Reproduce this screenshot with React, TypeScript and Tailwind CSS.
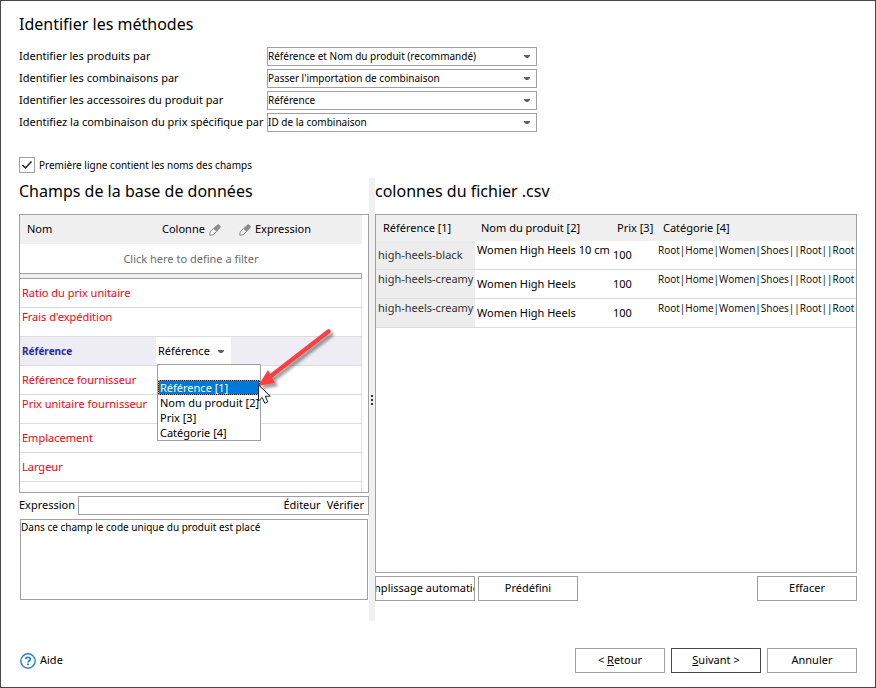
import type { ReactNode } from "react";

const METHODS = [
  { id: "products", label: "Identifier les produits par", value: "Référence et Nom du produit (recommandé)" },
  { id: "combinations", label: "Identifier les combinaisons par", value: "Passer l'importation de combinaison" },
  { id: "accessories", label: "Identifier les accessoires du produit par", value: "Référence" },
  { id: "price", label: "Identifiez la combinaison du prix spécifique par", value: "ID de la combinaison" },
];

const FIELDS = [
  { name: "Ratio du prix unitaire", top: false },
  { name: "Frais d'expédition", top: true },
  { name: "Référence", selected: true },
  { name: "Référence fournisseur", top: false },
  { name: "Prix unitaire fournisseur", top: true },
  { name: "Emplacement", top: false },
  { name: "Largeur", top: false },
];

const OPTIONS = ["", "Référence [1]", "Nom du produit [2]", "Prix [3]", "Catégorie [4]"];

const CATEGORY = "Root|Home|Women|Shoes||Root||Root";
const PRODUCTS = [
  { ref: "high-heels-black", name: "Women High Heels 10 cm", refTop: false, nameTop: true },
  { ref: "high-heels-creamy", name: "Women High Heels", refTop: true, nameTop: false },
  { ref: "high-heels-creamy", name: "Women High Heels", refTop: true, nameTop: false },
];

function Caret() {
  return (
    <svg className="pointer-events-none h-[3px] w-[6px]" viewBox="0 0 6 3" aria-hidden="true">
      <path d="M0 0h6v1L4 3H2L0 1z" fill="#606060" />
    </svg>
  );
}

function Pencil() {
  return (
    <svg className="h-3 w-3" viewBox="0 0 12 12" aria-hidden="true">
      <path d="M6.800 2 9.200 0 12 2.400 10.800 4.600 7.600 8 4 4.600z" fill="#8c8c8c" />
      <path d="M4.200 4.800 1.200 7.800.7 11.300 4.200 10.800 7.200 7.800" fill="#fafafa" stroke="#8c8c8c" />
    </svg>
  );
}

function Button({ children, className = "" }: { children: ReactNode; className?: string }) {
  return (
    <button
      type="button"
      className={`flex h-[25px] items-center justify-center overflow-hidden whitespace-nowrap border bg-white ${className}`}
    >
      {children}
    </button>
  );
}

function ColumnPicker() {
  return (
    <div className="relative flex h-7 items-center bg-white">
      <select
        aria-label="Colonne"
        defaultValue="Référence"
        className="h-7 w-full appearance-none bg-transparent pl-[2px] outline-none"
      >
        <option>Référence</option>
      </select>
      <span className="pointer-events-none absolute inset-y-0 right-[7px] flex items-center">
        <Caret />
      </span>
      <ul role="listbox" aria-label="Colonnes" className="absolute top-[27px] left-px z-10 w-[104px] border border-[#a0a0a0] bg-white">
        {OPTIONS.map((o) =>
          o === "Référence [1]" ? (
            <li key={o} role="option" aria-selected="true" className="h-[15px] border border-dotted border-[#ff8728] bg-black text-white">
              <span className="block bg-[#0078d7] pl-px leading-[13px] whitespace-nowrap">{o}</span>
            </li>
          ) : (
            <li key={o} role="option" aria-selected="false" className="h-[15px] pl-[2px] leading-[15px] whitespace-nowrap">
              {o}
            </li>
          ),
        )}
      </ul>
      <svg className="pointer-events-none absolute -top-3 left-[94px] z-20 h-[90px] w-[94px]" viewBox="0 0 94 90" aria-hidden="true">
        <defs>
          <filter id="shadow" x="-20%" y="-20%" width="150%" height="150%">
            <feDropShadow dx="3" dy="3" stdDeviation="1.5" floodColor="#000" floodOpacity="0.4" />
          </filter>
        </defs>
        <g filter="url(#shadow)">
          <path d="M78.500 6.500 19 52.500" stroke="#fb4143" strokeWidth="4.500" strokeLinecap="round" />
          <path d="M8 61 18 45 25 58z" fill="#fb4143" />
        </g>
        <path d="M8.500 60v16l3.700-3.500 2.600 5.700 3-1.300-2.500-5.700h5z" fill="#fff" stroke="#1c1c30" />
      </svg>
    </div>
  );
}

export default function App() {
  return (
    <div className="flex min-h-screen flex-col border border-[#47464a] bg-white px-[18px] pt-[11px] pb-[14px] font-['Noto_Sans','Open_Sans',sans-serif] text-[11px] text-black">
      <h1 className="text-[16px] leading-6">Identifier les méthodes</h1>

      <div className="mt-[11px] flex flex-col gap-[3px]">
        {METHODS.map((m) => (
          <div key={m.id} className="flex h-[19px] items-center">
            <label htmlFor={m.id} className="w-[248px] whitespace-nowrap">
              {m.label}
            </label>
            <div className="relative w-[270px]">
              <select
                id={m.id}
                defaultValue={m.value}
                className="block h-[19px] w-full appearance-none border border-[#a0a0a0] bg-white text-[10px] outline-none"
              >
                <option>{m.value}</option>
              </select>
              <span className="pointer-events-none absolute inset-y-0 right-[7px] flex items-center">
                <Caret />
              </span>
            </div>
          </div>
        ))}
      </div>

      <label className="mt-[25px] flex h-4 items-center gap-1 text-[10px]">
        <span className="relative h-4 w-4">
          <input type="checkbox" defaultChecked className="block h-4 w-4 appearance-none border border-[#a0a0a0] bg-white" />
          <svg className="pointer-events-none absolute inset-0 h-4 w-4" viewBox="0 0 16 16" aria-hidden="true">
            <path d="M3.500 8 6.500 11 12.500 4.500" fill="none" stroke="#222" strokeWidth="1.500" />
          </svg>
        </span>
        Première ligne contient les noms des champs
      </label>

      <main className="mt-[5px] flex min-w-0 flex-1">
        <section className="flex w-[350px] shrink-0 flex-col pb-[21px]">
          <h2 className="mb-[10px] text-[16px] leading-[26px]">Champs de la base de données</h2>
          <div className="flex flex-1 flex-col border border-[#a0a0a0] pr-[6px]">
            <table className="w-full table-fixed border-collapse">
              <colgroup>
                <col className="w-[136px]" />
                <col className="w-[75px]" />
                <col />
              </colgroup>
              <thead>
                <tr className="h-[29px] bg-[#f0f0f0] text-left">
                  <th className="p-0 pl-[7px] font-normal">Nom</th>
                  <th className="p-0 pl-[6px] font-normal">
                    <span className="flex items-center gap-1">
                      Colonne <Pencil />
                    </span>
                  </th>
                  <th className="p-0 pl-2 font-normal">
                    <span className="flex items-center gap-1">
                      <Pencil /> Expression
                    </span>
                  </th>
                </tr>
              </thead>
            </table>
            <button type="button" className="h-[29px] pt-px text-center text-[#6d6d6d]">
              Click here to define a filter
            </button>
            <div className="h-[6px] border-y border-r border-[#a0a0a0] bg-[#f0f0f0]" />
            <div className="flex-1 border-r border-[#e0e0e0]">
              <table className="w-full table-fixed border-separate border-spacing-0">
                <colgroup>
                  <col className="w-[136px]" />
                  <col className="w-[75px]" />
                  <col />
                </colgroup>
                <tbody>
                  {FIELDS.map((f) =>
                    f.selected ? (
                      <tr key={f.name} className="h-[29px] bg-[#eeedf4]">
                        <td className="border-b border-[#dcdcdc] p-0 pl-[2px] font-bold text-[#2b2ba5]">
                          <span className="text-[10px]">{f.name}</span>
                        </td>
                        <td className="border-b border-[#dcdcdc] p-0">
                          <ColumnPicker />
                        </td>
                        <td className="border-b border-[#dcdcdc] p-0" />
                      </tr>
                    ) : (
                      <tr key={f.name} className="h-[29px]">
                        <td
                          colSpan={3}
                          className={`border-b border-[#dcdcdc] p-0 pl-[2px] leading-[18px] text-[#fa0010] ${f.top ? "align-top" : "align-middle"}`}
                        >
                          {f.name}
                        </td>
                      </tr>
                    ),
                  )}
                </tbody>
              </table>
            </div>
          </div>

          <div className="mt-[3px] flex h-[19px] items-center">
            <label htmlFor="expression" className="w-[59px]">
              Expression
            </label>
            <div className="flex h-[19px] flex-1 items-center gap-[6px] border border-[#a0a0a0] pr-1">
              <input id="expression" type="text" className="h-full min-w-0 flex-1 bg-transparent outline-none" />
              <button type="button">Éditeur</button>
              <button type="button">Vérifier</button>
            </div>
          </div>
          <textarea
            aria-label="Description"
            readOnly
            defaultValue="Dans ce champ le code unique du produit est placé"
            className="mt-1 mr-px ml-px h-[81px] resize-none border border-[#a0a0a0] text-[10px] leading-[15px] outline-none"
          />
        </section>

        <div className="flex w-[6px] shrink-0 flex-col items-center justify-center gap-[2px] bg-[#f0f0f0]">
          <span className="h-[2px] w-[2px] bg-[#333]" />
          <span className="h-[2px] w-[2px] bg-[#333]" />
          <span className="h-[2px] w-[2px] bg-[#333]" />
        </div>

        <section className="flex min-w-0 flex-1 flex-col pb-[20px]">
          <h2 className="mb-[10px] text-[16px] leading-[26px]">colonnes du fichier .csv</h2>
          <div className="flex-1 overflow-hidden border border-[#a0a0a0]">
            <table className="w-full table-fixed border-separate border-spacing-0 whitespace-nowrap">
              <colgroup>
                <col className="w-[99px]" />
                <col className="w-[136px]" />
                <col className="w-[46px]" />
                <col />
              </colgroup>
              <thead>
                <tr className="h-[26px] bg-[#f0f0f0] text-left">
                  <th className="p-0 pl-[7px] font-normal">Référence [1]</th>
                  <th className="p-0 pl-[6px] font-normal">Nom du produit [2]</th>
                  <th className="p-0 pl-[6px] font-normal">Prix [3]</th>
                  <th className="p-0 pl-[6px] font-normal">Catégorie [4]</th>
                </tr>
              </thead>
              <tbody className="leading-[18px]">
                {PRODUCTS.map((p, i) => (
                  <tr key={i} className="h-[29px]">
                    <td className={`border-b border-[#dcdcdc] bg-[#ededed] p-0 pl-[2px] text-[#333] ${p.refTop ? "align-top" : "align-middle"}`}>
                      {p.ref}
                    </td>
                    <td className={`border-b border-[#dcdcdc] p-0 pl-[2px] ${p.nameTop ? "align-top" : "align-middle"}`}>{p.name}</td>
                    <td className="border-b border-[#dcdcdc] p-0 pl-[2px] align-middle">100</td>
                    <td className="border-b border-[#dcdcdc] p-0 pl-px align-top font-['Open_Sans','Noto_Sans',sans-serif] text-[10px]">
                      {CATEGORY}
                    </td>
                  </tr>
                ))}
              </tbody>
            </table>
          </div>
          <div className="mt-[3px] flex gap-[3px]">
            <Button className="w-[100px] border-[#a0a0a0]">Remplissage automatique</Button>
            <Button className="w-[100px] border-[#a0a0a0]">Prédéfini</Button>
            <Button className="ml-auto w-[100px] border-[#a0a0a0]">Effacer</Button>
          </div>
        </section>
      </main>

      <footer className="mt-[27px] flex items-center gap-[6px]">
        <a href="#aide" className="mr-auto ml-px flex items-center gap-1">
          <svg className="h-4 w-4" viewBox="0 0 16 16" aria-hidden="true">
            <circle cx="8" cy="8" r="7.200" fill="#fff" stroke="#2b7de0" strokeWidth="1.400" />
            <path d="M5.700 6.300C5.700 3.700 10.300 3.700 10.300 6.200 10.300 7.800 8 7.800 8 9.500" fill="none" stroke="#2b7de0" strokeWidth="1.700" />
            <path d="M7.100 10.500h1.800v1.800H7.100z" fill="#2b7de0" />
          </svg>
          Aide
        </a>
        <Button className="w-[90px] border-[#a0a0a0]">
          <span>
            &lt; <u>R</u>etour
          </span>
        </Button>
        <Button className="w-[90px] border-[#47475c]">
          <span>
            <u>S</u>uivant &gt;
          </span>
        </Button>
        <Button className="w-[90px] border-[#a0a0a0]">Annuler</Button>
      </footer>
    </div>
  );
}
